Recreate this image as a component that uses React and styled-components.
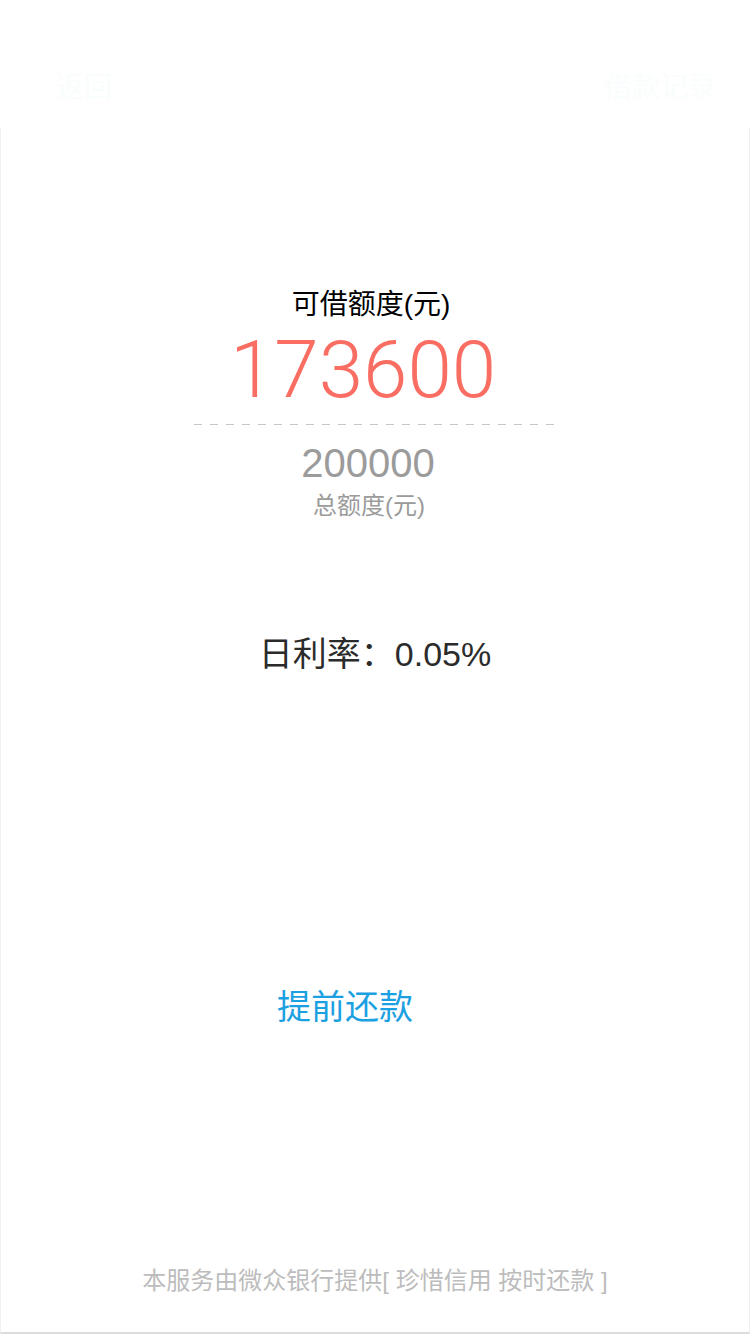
import React from "react";
import styled, { createGlobalStyle } from "styled-components";

const GlobalStyle = createGlobalStyle`
  html, body {
    margin: 0;
    padding: 0;
    background: #fff;
  }
  body {
    font-family: "Liberation Sans", "Noto Sans CJK SC", sans-serif;
  }
`;

const Page = styled.div`
  width: 750px;
  height: 1334px;
  display: flex;
  flex-direction: column;
  box-sizing: border-box;
`;

const Header = styled.div`
  height: 128px;
  flex-shrink: 0;
  display: flex;
  align-items: center;
  justify-content: space-between;
  padding: 0 34px 0 56px;
  box-sizing: border-box;
`;

const HeaderLink = styled.span`
  font-size: 28px;
  color: #f9fdfd;
  font-family: "Noto Sans CJK SC", sans-serif;
  margin-top: 42px;
`;

const Main = styled.div`
  flex: 1;
  display: flex;
  flex-direction: column;
  align-items: center;
  border-left: 1px solid #f0f0f0;
  border-right: 1px solid #f0f0f0;
  border-bottom: 2px solid #dcdcdc;
  padding-top: 157px;
`;

const Label = styled.div`
  font-size: ${(p) => p.size || 28}px;
  line-height: ${(p) => p.lh || 40}px;
  color: ${(p) => p.color || "#000"};
  margin-top: ${(p) => p.top || 0}px;
  padding-right: ${(p) => p.shift || 0}px;
  font-family: "Liberation Sans", "Noto Sans CJK SC", sans-serif;
`;

const Amount = styled.div`
  font-family: "Roboto", "Liberation Sans", sans-serif;
  font-weight: 300;
  font-size: 80px;
  line-height: 90px;
  color: #fa6d62;
  padding-right: 24px;
`;

const Divider = styled.div`
  width: 362px;
  height: 1px;
  margin: 9px 0 16px;
  background: repeating-linear-gradient(
    to right,
    #c6c6c6 0,
    #c6c6c6 8px,
    transparent 8px,
    transparent 16px
  );
`;

const Total = styled.div`
  font-size: 40px;
  line-height: 44px;
  color: #9b9b9b;
  padding-right: 14px;
`;

const Rate = styled.div`
  margin-top: 111px;
  font-size: 34px;
  line-height: 44px;
  color: #2b2b2b;
  font-family: "Liberation Sans", "Noto Sans CJK SC", sans-serif;
`;

const ActionRow = styled.div`
  margin-top: 307px;
  padding-right: 60px;
`;

const ActionButton = styled.span`
  font-size: 34px;
  line-height: 44px;
  color: #1ba0e2;
  font-family: "Noto Sans CJK SC", sans-serif;
`;

const Footer = styled.div`
  margin-top: auto;
  margin-bottom: 36px;
  font-size: 24px;
  line-height: 30px;
  color: #bcbcbc;
  font-family: "Liberation Sans", "Noto Sans CJK SC", sans-serif;
`;

export default function App() {
  return (
    <>
      <GlobalStyle />
      <Page>
        <Header>
          <HeaderLink>返回</HeaderLink>
          <HeaderLink>借款记录</HeaderLink>
        </Header>
        <Main>
          <Label shift={8}>可借额度(元)</Label>
          <Amount>173600</Amount>
          <Divider />
          <Total>200000</Total>
          <Label size={24} lh={30} color="#9b9b9b" top={6} shift={12}>
            总额度(元)
          </Label>
          <Rate>日利率：0.05%</Rate>
          <ActionRow>
            <ActionButton>提前还款</ActionButton>
          </ActionRow>
          <Footer>本服务由微众银行提供[ 珍惜信用 按时还款 ]</Footer>
        </Main>
      </Page>
    </>
  );
}
